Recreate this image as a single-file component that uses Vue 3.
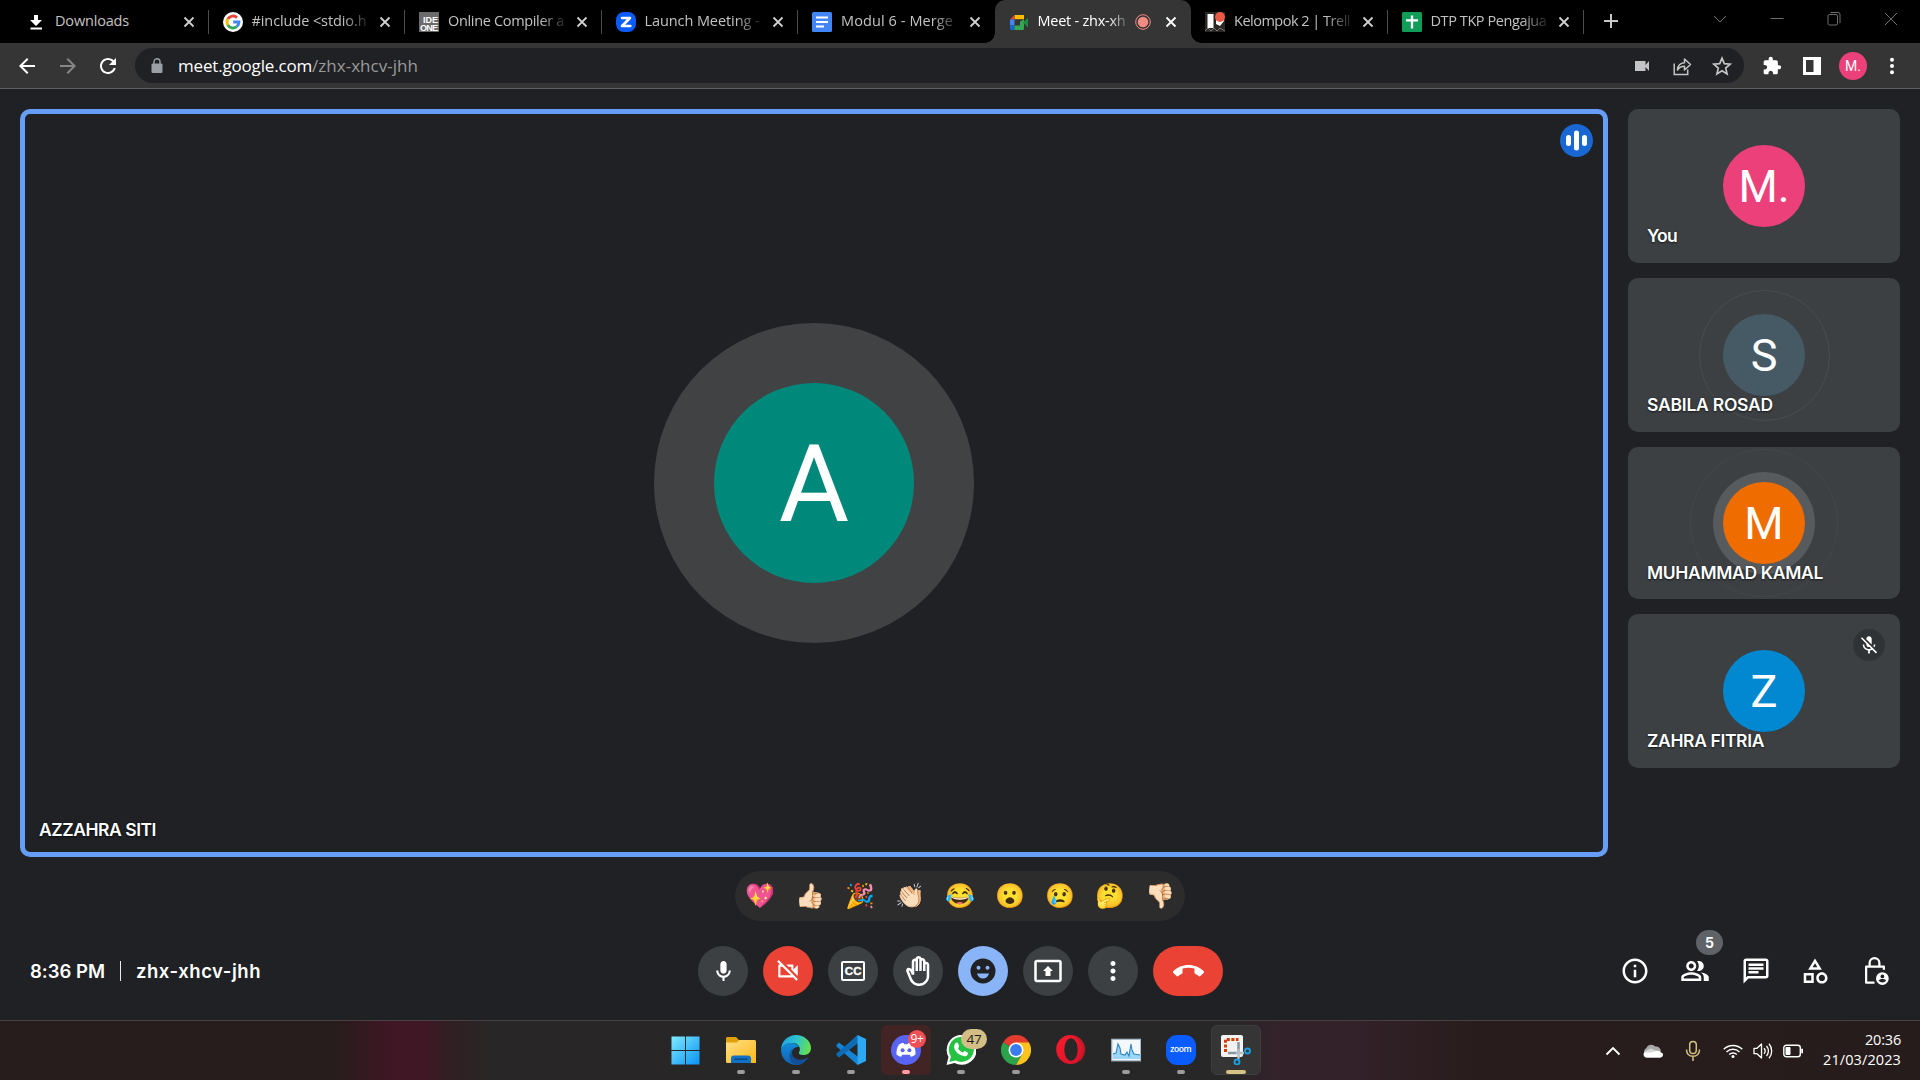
<script setup>
// Spreads or tightens the letters of a label so that it fills a known width.
const vFit = {
  mounted(el, { value }) {
    const natural = el.getBoundingClientRect().width
    el.style.letterSpacing = (value - natural) / el.textContent.length + 'px'
  },
}

const tabs = [
  { id: 'downloads', title: 'Downloads', w: 74 },
  { id: 'google', title: '#include <stdio.h', w: 115 },
  { id: 'ideone', title: 'Online Compiler a', w: 116 },
  { id: 'zoomtab', title: 'Launch Meeting -', w: 115 },
  { id: 'docs', title: 'Modul 6 - Merge', w: 112 },
  { id: 'meet', title: 'Meet - zhx-xh', w: 88, active: true },
  { id: 'trello', title: 'Kelompok 2 | Trell', w: 116 },
  { id: 'sheets', title: 'DTP TKP Pengajua', w: 116 },
]

const people = [
  { name: 'You', w: 30, letter: 'M.', color: '#ec407a', h: 154 },
  { name: 'SABILA ROSAD', w: 126, letter: 'S', color: '#455a64', h: 154, ring: 's' },
  { name: 'MUHAMMAD KAMAL', w: 176, letter: 'M', color: '#ef6c00', h: 152, ring: 'm' },
  { name: 'ZAHRA FITRIA', w: 117, letter: 'Z', color: '#0288d1', h: 154, muted: true },
]

const reactions = ['💖', '👍🏻', '🎉', '👏🏻', '😂', '😮', '😢', '🤔', '👎🏻']

const MIC = 'M12 14c1.66 0 3-1.34 3-3V5c0-1.66-1.34-3-3-3S9 3.34 9 5v6c0 1.66 1.34 3 3 3zM17 11c0 2.76-2.24 5-5 5s-5-2.24-5-5H5c0 3.53 2.61 6.43 6 6.92V21h2v-3.08c3.39-.49 6-3.39 6-6.92h-2z'
const CAM_OFF = 'M9.56 8l-2-2-4.15-4.14L2 3.27 4.73 6H4c-.55 0-1 .45-1 1v10c0 .55.45 1 1 1h12c.21 0 .39-.08.55-.18L19.73 21l1.41-1.41-8.86-8.86L9.56 8zM5 16V8h1.73l8 8H5zm10-8v2.61l6 6V6.5l-4 4V7c0-.55-.45-1-1-1h-5.61l2 2H15z'
const HAND = 'M21 7c0-1.38-1.12-2.5-2.5-2.5-.17 0-.34.02-.5.05V4c0-1.38-1.12-2.5-2.5-2.5-.23 0-.46.03-.67.09C14.46.66 13.56 0 12.5 0c-1.23 0-2.25.89-2.46 2.06C9.87 2.02 9.69 2 9.5 2 8.12 2 7 3.12 7 4.5v5.89c-.34-.31-.76-.54-1.22-.66L5.01 9.52c-.83-.23-1.7.09-2.19.83-.38.57-.4 1.31-.15 1.95l2.56 6.43C6.49 21.91 9.57 24 13 24c4.42 0 8-3.58 8-8V7zm-2 9c0 3.31-2.69 6-6 6-2.61 0-4.95-1.59-5.91-4.01L4.53 11.6l.53.14c.46.12.83.46 1 .9L7 15h2V4.5c0-.28.22-.5.5-.5s.5.22.5.5V12h2V2.5c0-.28.22-.5.5-.5s.5.22.5.5V12h2V4c0-.28.22-.5.5-.5s.5.22.5.5v8h2V7c0-.28.22-.5.5-.5s.5.22.5.5v9z'
const PRESENT = 'M21 3H3c-1.11 0-2 .89-2 2v14c0 1.11.89 2 2 2h18c1.11 0 2-.89 2-2V5c0-1.11-.89-2-2-2zm0 16.02H3V4.98h18v14.04zM10 12H8l4-4 4 4h-2v4h-4v-4z'
const MORE = 'M12 8c1.1 0 2-.9 2-2s-.9-2-2-2-2 .9-2 2 .9 2 2 2zm0 2c-1.1 0-2 .9-2 2s.9 2 2 2 2-.9 2-2-.9-2-2-2zm0 6c-1.1 0-2 .9-2 2s.9 2 2 2 2-.9 2-2-.9-2-2-2z'
const CALL_END = 'M12 9c-1.6 0-3.15.25-4.6.72v3.1c0 .39-.23.74-.56.9-.98.49-1.87 1.12-2.66 1.85-.18.18-.43.28-.7.28-.28 0-.53-.11-.71-.29L.29 13.08c-.18-.17-.29-.42-.29-.7 0-.28.11-.53.29-.71C3.34 8.78 7.46 7 12 7s8.66 1.78 11.71 4.67c.18.18.29.43.29.71 0 .28-.11.53-.29.71l-2.48 2.48c-.18.18-.43.29-.71.29-.27 0-.52-.11-.7-.28-.79-.74-1.69-1.36-2.67-1.85-.33-.16-.56-.5-.56-.9v-3.1C15.15 9.25 13.6 9 12 9z'
const MIC_OFF = 'M19 11h-1.7c0 .74-.16 1.43-.43 2.05l1.23 1.23c.56-.98.9-2.09.9-3.28zm-4.02.17c0-.06.02-.11.02-.17V5c0-1.66-1.34-3-3-3S9 3.34 9 5v.18l5.98 5.99zM4.27 3L3 4.27l6.01 6.01V11c0 1.66 1.33 3 2.99 3 .22 0 .44-.03.65-.08l1.66 1.66c-.71.33-1.5.52-2.31.52-2.76 0-5.3-2.1-5.3-5.1H5c0 3.41 2.72 6.23 6 6.72V21h2v-3.28c.91-.13 1.77-.45 2.54-.9L19.73 21 21 19.73 4.27 3z'

const controls = [
  { id: 'mic', d: MIC, size: 25 },
  { id: 'cam', d: CAM_OFF, size: 26, tone: 'red' },
  { id: 'cc' },
  { id: 'hand', d: HAND, size: 30 },
  { id: 'mood', tone: 'blue' },
  { id: 'present', d: PRESENT, size: 30 },
  { id: 'more', d: MORE, size: 30 },
]

const panels = [
  { id: 'info', d: 'M11 7h2v2h-2zm0 4h2v6h-2zm1-9C6.48 2 2 6.48 2 12s4.48 10 10 10 10-4.48 10-10S17.52 2 12 2zm0 18c-4.41 0-8-3.59-8-8s3.59-8 8-8 8 3.59 8 8-3.59 8-8 8z' },
  { id: 'people', d: 'M16.67 13.13C18.04 14.06 19 15.32 19 17v3h4v-3c0-2.18-3.57-3.47-6.33-3.87zM15 12c2.21 0 4-1.79 4-4s-1.79-4-4-4c-.47 0-.91.1-1.33.24C14.5 5.27 15 6.58 15 8s-.5 2.73-1.33 3.76c.42.14.86.24 1.33.24zM9 12c2.21 0 4-1.79 4-4s-1.79-4-4-4-4 1.79-4 4 1.79 4 4 4zm0-6c1.1 0 2 .9 2 2s-.9 2-2 2-2-.9-2-2 .9-2 2-2zM9 13c-2.67 0-8 1.34-8 4v3h16v-3c0-2.66-5.33-4-8-4zm6 5H3v-.99C3.2 16.29 6.3 15 9 15s5.8 1.29 6 2v1z', badge: '5' },
  { id: 'chat', d: 'M4 4h16v12H5.17L4 17.17V4m0-2c-1.1 0-1.99.9-1.99 2L2 22l4-4h14c1.1 0 2-.9 2-2V4c0-1.1-.9-2-2-2H4zm2 10h8v2H6v-2zm0-3h12v2H6V9zm0-3h12v2H6V6z' },
  { id: 'activities', d: 'M12 2l-5.5 9h11L12 2zm0 3.84L13.93 9h-3.87L12 5.84zM17.5 13c-2.49 0-4.5 2.01-4.5 4.5s2.01 4.5 4.5 4.5 4.5-2.01 4.5-4.5-2.01-4.5-4.5-4.5zm0 7c-1.38 0-2.5-1.12-2.5-2.5s1.12-2.5 2.5-2.5 2.5 1.12 2.5 2.5-1.12 2.5-2.5 2.5zM3 21.5h8v-8H3v8zm2-6h4v4H5v-4z' },
  { id: 'host' },
]
</script>

<template>
  <div class="screen">
    <div class="tabstrip">
      <div v-for="t in tabs" :key="t.id" class="tab" :class="[t.id, { active: t.active }]">
        <svg class="fav" viewBox="0 0 20 20">
          <path v-if="t.id === 'downloads'" fill="#fff" d="M8 3h4v5h4l-6 6-6-6h4zM4.500 15.600h11.500v2H4.500z" />
          <g v-else-if="t.id === 'google'">
            <circle cx="10" cy="10" r="10" fill="#fff" />
            <g fill="none" stroke-width="2.9">
              <path d="M14 5.6A6 6 0 0 0 4.8 7" stroke="#ea4335" />
              <path d="M4.8 7a6 6 0 0 0 0 6" stroke="#fbbc05" />
              <path d="M4.8 13a6 6 0 0 0 8.9 1.7" stroke="#34a853" />
              <path d="M13.7 14.7A6 6 0 0 0 16 10H10.200" stroke="#4285f4" />
            </g>
          </g>
          <g v-else-if="t.id === 'ideone'">
            <rect width="20" height="20" fill="#6b6b6b" />
            <text x="4" y="10.600" class="ide" textLength="15">IDE</text>
            <text x="1" y="19" class="ide" textLength="18">ONE</text>
          </g>
          <g v-else-if="t.id === 'zoomtab'">
            <rect width="20" height="20" rx="8" fill="#0b5cff" />
            <path d="M6 6h8l-8 8h8.300" fill="none" stroke="#fff" stroke-width="2.600" stroke-linejoin="round" stroke-linecap="round" />
          </g>
          <g v-else-if="t.id === 'docs'">
            <rect width="20" height="20" rx="1.500" fill="#4285f4" />
            <path d="M4 5.500h12M4 10h12M4 14.500h8" stroke="#fff" stroke-width="2" />
          </g>
          <g v-else-if="t.id === 'meet'">
            <path d="M5.500 3H15v4.200h-9.500z" fill="#fbbc04" />
            <path d="M1 7.500 5.500 3v4.500z" fill="#ea4335" />
            <path d="M1 7.500h4.500v6H1z" fill="#4285f4" />
            <path d="M1 13.500h4.500V18H2.500A1.500 1.500 0 0 1 1 16.500z" fill="#1967d2" />
            <path d="M5.500 13.500H11V9.800l4-2.600V16.500a1.500 1.500 0 0 1-1.500 1.500h-8z" fill="#34a853" />
            <path d="M14 10.500 19 6v9.500z" fill="#1e8e3e" />
          </g>
          <g v-else-if="t.id === 'trello'">
            <rect width="20" height="20" fill="#2a2725" />
            <path d="M0 19l3-3 3 3 3-3 3 3 3-3 5 3" stroke="#777" fill="none" />
            <rect x="2.500" y="2" width="6" height="14" fill="#fff" />
            <path d="M11 3h8v6l-4 5-4-2z" fill="#fff" />
            <circle cx="15" cy="5" r="5" fill="#eb5a46" />
          </g>
          <g v-else>
            <rect width="20" height="20" rx="1.500" fill="#0f9d58" />
            <path d="M10 3.500v13M4 8.300h12" stroke="#fff" stroke-width="2.300" />
          </g>
        </svg>
        <div class="title"><span v-fit="t.w">{{ t.title }}</span></div>
        <svg v-if="t.active" class="rec" viewBox="0 0 16 16">
          <circle cx="8" cy="8" r="7.300" fill="none" stroke="#f28b82" />
          <circle cx="8" cy="8" r="5.300" fill="#f28b82" />
        </svg>
        <svg class="x" viewBox="0 0 12 12"><path d="M1.500 1.500l9 9M10.500 1.500l-9 9" /></svg>
      </div>
      <svg class="plus" viewBox="0 0 16 16"><path d="M8 1v14M1 8h14" stroke="#c8c8c8" stroke-width="2" /></svg>
      <div class="winbtns">
        <svg viewBox="0 0 14 14"><path d="M1 4l6 6 6-6" /></svg>
        <svg viewBox="0 0 14 14"><path d="M.5 6.500h13" /></svg>
        <svg viewBox="0 0 14 14"><rect x="1" y="2.500" width="9.500" height="10.500" rx="1.500" /><path d="M3.500.5h7.500a2 2 0 0 1 2 2v8.500" /></svg>
        <svg viewBox="0 0 14 14"><path d="M1 1l12 12M13 1 1 13" /></svg>
      </div>
    </div>

    <div class="toolbar">
      <div class="nav">
        <svg viewBox="0 0 24 24" fill="#fff"><path d="M20 11H7.830l5.590-5.590L12 4l-8 8 8 8 1.410-1.410L7.830 13H20v-2z" /></svg>
        <svg viewBox="0 0 24 24" fill="#868686"><path d="M4 11h12.170l-5.590-5.590L12 4l8 8-8 8-1.410-1.410L16.170 13H4v-2z" /></svg>
        <svg viewBox="0 0 24 24" fill="#fff"><path d="M17.650 6.350C16.200 4.900 14.210 4 12 4c-4.420 0-7.990 3.580-7.990 8s3.570 8 7.990 8c3.730 0 6.840-2.550 7.730-6h-2.080c-.82 2.330-3.040 4-5.650 4-3.310 0-6-2.690-6-6s2.690-6 6-6c1.660 0 3.140.69 4.220 1.780L13 11h7V4l-2.350 2.350z" /></svg>
      </div>
      <div class="omnibox">
        <svg class="lock" viewBox="0 0 12 16"><rect x=".5" y="5.500" width="11" height="9.500" rx="1.300" fill="#9aa0a6" /><path d="M3 6V3.800a3 3 0 0 1 6 0V6" fill="none" stroke="#9aa0a6" stroke-width="1.400" /></svg>
        <div class="url"><span v-fit="134" class="host">meet.google.com</span><span v-fit="106">/zhx-xhcv-jhh</span></div>
        <div class="omniicons">
          <svg viewBox="0 0 20 20"><path d="M3 5h10.500v10H3zM13.500 9l3.500-4v10l-3.500-4z" fill="#c4c4c4" /></svg>
          <svg viewBox="0 0 20 20" fill="none" stroke="#c4c4c4" stroke-width="1.500"><path d="M2.200 7.500v11h13.500v-5" /><path d="M5.500 14c.3-4.500 3-7 7-7.200V3l6 5.500-6 5.500v-3.700c-3.500 0-5.500 1.200-7 3.700z" stroke-linejoin="round" /></svg>
          <svg viewBox="0 0 20 20"><path d="M10 2.200l2.300 5.500 5.900.5-4.500 3.900 1.400 5.800L10 14.800l-5.100 3.100 1.400-5.800-4.500-3.900 5.900-.5z" fill="none" stroke="#c4c4c4" stroke-width="1.700" /></svg>
        </div>
      </div>
      <div class="ext">
        <svg viewBox="0 0 24 24"><path fill="#fff" d="M20.500 11H19V7c0-1.100-.9-2-2-2h-4V3.500C13 2.120 11.880 1 10.500 1S8 2.120 8 3.500V5H4c-1.100 0-1.990.9-1.990 2v3.800H3.500c1.490 0 2.700 1.210 2.700 2.700s-1.210 2.700-2.700 2.700H2V20c0 1.100.9 2 2 2h3.800v-1.500c0-1.490 1.210-2.700 2.700-2.700 1.490 0 2.700 1.210 2.700 2.700V22H17c1.100 0 2-.9 2-2v-4h1.500c1.380 0 2.500-1.120 2.500-2.500S21.880 11 20.500 11z" /></svg>
        <svg viewBox="0 0 20 20"><path fill="#fff" fill-rule="evenodd" d="M1 1h18v18H1zM4 4v12h7.500V4z" /></svg>
        <span class="profile">M.</span>
        <svg viewBox="0 0 20 20" fill="#fff"><circle cx="10" cy="3.700" r="2" /><circle cx="10" cy="10" r="2" /><circle cx="10" cy="16.300" r="2" /></svg>
      </div>
    </div>

    <div class="meeting">
      <div class="stage">
        <div class="speaker">
          <div class="halo"><div class="bigavatar">A</div></div>
          <svg class="talk" viewBox="0 0 33 33"><circle cx="16.500" cy="16.500" r="16.500" fill="#1967d2" /><g fill="#fff"><rect x="6" y="11" width="5" height="11" rx="2.500" /><rect x="14" y="6.500" width="5" height="20" rx="2.500" /><rect x="22" y="11" width="5" height="11" rx="2.500" /></g></svg>
          <div class="name"><span v-fit="117">AZZAHRA SITI</span></div>
        </div>
        <div class="side">
          <div v-for="p in people" :key="p.name" class="tile" :style="{ height: p.h + 'px' }">
            <div v-if="p.ring" class="ring" :class="p.ring"></div>
            <div class="avatar" :class="{ loud: p.ring === 'm' }" :style="{ background: p.color }">{{ p.letter }}</div>
            <svg v-if="p.muted" class="muted" viewBox="0 0 32 32"><circle cx="16" cy="16" r="16" fill="#303336" /><path :d="MIC_OFF" fill="#fff" transform="translate(5.200 5.500) scale(.9)" /></svg>
            <div class="name"><span v-fit="p.w">{{ p.name }}</span></div>
          </div>
        </div>
      </div>

      <div class="reactions"><span v-for="r in reactions" :key="r">{{ r }}</span></div>

      <div class="bottombar">
        <div class="meta"><span v-fit="75">8:36 PM</span><i></i><span v-fit="125">zhx-xhcv-jhh</span></div>
        <div class="controls">
          <button v-for="c in controls" :key="c.id" :class="c.tone">
            <svg v-if="c.d" viewBox="0 0 24 24" :width="c.size" :height="c.size"><path :d="c.d" /></svg>
            <svg v-else-if="c.id === 'cc'" viewBox="0 0 24 20" width="24" height="20"><rect x="1" y="1" width="22" height="18" rx="1" fill="none" stroke="#fff" stroke-width="2" /><text x="3.700" y="14.200" class="cc" textLength="16.800">CC</text></svg>
            <svg v-else viewBox="0 0 26 26" width="26" height="26"><circle cx="13" cy="13" r="12.500" fill="#202124" /><circle cx="8.500" cy="9.800" r="2" /><circle cx="17.500" cy="9.800" r="2" /><path d="M7 15.500h12c-.8 3-3 5-6 5s-5.200-2-6-5z" /></svg>
          </button>
          <button class="leave"><svg viewBox="0 0 24 24" width="31" height="31"><path :d="CALL_END" /></svg></button>
        </div>
        <div class="panels">
          <div v-for="p in panels" :key="p.id" class="panel" :class="p.id">
            <svg v-if="p.d" viewBox="0 0 24 24"><path :d="p.d" fill-rule="evenodd" /></svg>
            <svg v-else viewBox="0 0 24 24"><path d="M10.800 21.300H4.100V8.400H18.300v2.600M6.900 8V5.500a3.900 3.900 0 0 1 7.800 0V8" fill="none" stroke="#fff" stroke-width="1.800" stroke-linejoin="round" /><circle cx="17.100" cy="18" r="5.100" /><circle cx="17.100" cy="16.300" r="1.500" fill="#202124" /><path d="M14.100 19.600c1.600-1.500 4.400-1.500 6 0-1.600 2-4.400 2-6 0z" fill="#202124" /></svg>
            <span v-if="p.badge" class="badge">{{ p.badge }}</span>
          </div>
        </div>
      </div>
    </div>

    <div class="taskbar">
      <div class="apps">
        <div class="app nodot start">
          <svg viewBox="0 0 30 30"><defs><linearGradient id="win" x1="0" y1="0" x2="1" y2="1"><stop offset="0" stop-color="#7eebff" /><stop offset="1" stop-color="#0a92f5" /></linearGradient></defs><path d="M.5.5h14v14H.5zM15.500.5h14v14h-14zM.5 15.500h14v14H.5zM15.500 15.500h14v14h-14z" fill="url(#win)" /></svg>
        </div>
        <div class="app">
          <svg viewBox="0 0 30 30"><defs><linearGradient id="fol" x1="0" y1="0" x2="1" y2="1"><stop offset="0" stop-color="#ffe08a" /><stop offset="1" stop-color="#fdb813" /></linearGradient></defs><path d="M0 3.500C0 2.600.6 2 1.500 2H10l3 3h15v6H0z" fill="#dfa00b" /><path d="M0 7.500h10.500l3-2.500H28.500A1.500 1.500 0 0 1 30 6.500V28H1.500A1.500 1.500 0 0 1 0 26.500z" fill="url(#fol)" /><path d="M5 28v-4.500a3 3 0 0 1 3-3h14a3 3 0 0 1 3 3V28z" fill="#1271c4" /><path d="M8.500 24.200h13" stroke="#0b4377" stroke-width="1.300" /></svg>
        </div>
        <div class="app">
          <svg viewBox="0 0 30 30"><defs><linearGradient id="ed" x1="0" y1=".2" x2="1" y2=".4"><stop offset="0" stop-color="#1ba3e0" /><stop offset=".5" stop-color="#2cc3d2" /><stop offset="1" stop-color="#66e04f" /></linearGradient><linearGradient id="ed2" x1="0" y1="0" x2="0" y2="1"><stop offset="0" stop-color="#138bd8" /><stop offset="1" stop-color="#1061b0" /></linearGradient></defs><path d="M0 15C0 6.500 6.800 0 15 0s15 6 15 13c0 4.500-3.300 7-7.500 7-3.200 0-4.600-1-4.600-2s1-1.300 1-4c0-3-3-6-7.400-6C6 8 1 11 0 15z" fill="url(#ed)" /><path d="M0 15c1-4 5-7 10-7 4 0 7 2 8 4-4-.5-7 2-7 6 0 6.500 5.500 11 11 10.300A15 15 0 0 1 0 15z" fill="url(#ed2)" /><path d="M13 12.800c-4 3-3 10 4 11.700 4 1 8-1 10.500-2.500C25 27 20 30 15 30 8 29 6 16 13 12.800z" fill="#124f97" /></svg>
        </div>
        <div class="app">
          <svg viewBox="0 0 30 30"><path d="M21.500 0 5.500 15l16 15V21.500L12.500 15l9-6.500z" fill="#1b7fcb" /><path d="M.5 9.700 3 7.600l19 14.400v8L.5 11.500z" fill="#1583d3" /><path d="M.5 20.300 3 22.400l19-14.400V0L.5 18.500z" fill="#0c6cb5" /><path d="M21.500 0 30 4v22l-8.500 4z" fill="#2da8f3" /></svg>
        </div>
        <div class="app discord">
          <svg viewBox="0 0 30 30"><circle cx="15" cy="15" r="15" fill="#5865f2" /><path d="M8 9.500c2-1.200 3.500-1.500 4.700-1.500l.6 1.300h3.400l.6-1.300c1.200 0 2.700.3 4.700 1.500 2 3 2.800 6.500 2.500 10-1.500 1.200-3 1.900-4.700 2.200l-1-1.900h-7.600l-1 1.900c-1.700-.3-3.200-1-4.700-2.200-.3-3.500.5-7 2.500-10z" fill="#fff" /><circle cx="11.600" cy="15.300" r="2" fill="#5865f2" /><circle cx="18.400" cy="15.300" r="2" fill="#5865f2" /></svg>
          <span class="count red">9+</span>
        </div>
        <div class="app">
          <svg viewBox="0 0 30 30"><path d="M.5 30l2-8A15 15 0 1 1 8.500 28z" fill="#fff" /><path d="M3.300 27l1.700-5.500a12.500 12.500 0 1 1 4.500 4z" fill="#25c244" /><path d="M9.600 8.200c1-1 2-.8 2.500.2l1 2.500c.3.700-1 1.700-1 2.300.9 2 2.500 3.500 4.600 4.300.7 0 1.400-1.700 2.100-1.400l2.700 1.300c.8.500.4 2.200-.5 3-1.500 1.400-3.700 1-6.400-.3-3.500-1.700-5.500-4.600-6.200-6.700-.6-2-.2-3.800 1.200-5.200z" fill="#fff" /></svg>
          <span class="count gold">47</span>
        </div>
        <div class="app">
          <svg viewBox="0 0 30 30"><path d="M15 15 2 7.500A15 15 0 0 1 28 7.500L28 8H15z" fill="#e33b2e" /><path d="M2 7.500A15 15 0 0 0 15 30l6.500-11.200L15 15z" fill="#2ba24c" /><path d="M15 30A15 15 0 0 0 28 7.500H15l6.300 11.200z" fill="#fcc31e" /><circle cx="15" cy="15" r="7.500" fill="#fff" /><circle cx="15" cy="15" r="5.900" fill="#3a7cf0" /></svg>
        </div>
        <div class="app nodot">
          <svg viewBox="0 0 30 30"><defs><linearGradient id="op" x1="0" y1="0" x2="1" y2="1"><stop offset="0" stop-color="#ff1b2d" /><stop offset="1" stop-color="#d0132a" /></linearGradient></defs><ellipse cx="14.500" cy="14.500" rx="14.300" ry="14.500" fill="url(#op)" /><path d="M14 .5a14.300 14.300 0 1 1 0 28.500 12 12 0 0 0 8-3c3-3 4-7 4-11s-2-9-5-11a10 10 0 0 0-7-3.500z" fill="#b21b26" opacity=".5" /><ellipse cx="15" cy="14.500" rx="6.700" ry="11.300" fill="#282828" /></svg>
        </div>
        <div class="app">
          <svg viewBox="0 0 30 30"><rect x=".8" y="4.300" width="28.900" height="21.500" fill="#f4f8fb" stroke="#a8bccb" stroke-width="1.200" /><path d="M2 24v-5l3-1 2-9 2 4 1 6 4 1 2-3 2 4 2-13 1 7 2 4 6 1v4z" fill="#9bd5f7" /><path d="M2 19l3-1 2-9 2 4 1 6 4 1 2-3 2 4 2-12 1 6 2 4 6 1" fill="none" stroke="#2d86c4" stroke-width="1.100" /></svg>
        </div>
        <div class="app">
          <svg viewBox="0 0 30 30"><rect width="30" height="30" rx="11" fill="#0b5cff" /><text x="4.200" y="17.300" class="zoom" textLength="21.500">zoom</text></svg>
        </div>
        <div class="app snip">
          <svg viewBox="0 0 30 30"><rect x="0" y="0" width="22" height="22" rx="2" fill="#f3f3f3" /><path d="M4.500 17V4.500h13" fill="none" stroke="#d83b01" stroke-width="3" stroke-dasharray="3 1.600" /><path d="M17.500 7v11H7" fill="none" stroke="#8b97a0" stroke-width="2.600" /><path d="M17.500 14v10M15 18h8" fill="none" stroke="#b5bec5" stroke-width="2.400" /><circle cx="26.500" cy="16" r="2.500" fill="none" stroke="#1e9de0" stroke-width="1.900" /><circle cx="16" cy="27" r="2.500" fill="none" stroke="#1e9de0" stroke-width="1.900" /></svg>
        </div>
      </div>
      <div class="tray">
        <svg class="t1" viewBox="0 0 20 20"><path d="M3.500 13.500 10 7l6.500 6.500" fill="none" stroke="#fff" stroke-width="1.900" /></svg>
        <svg class="t2" viewBox="0 0 20 14"><path d="M3 11a4 4 0 0 1 .3-7 5.500 5.500 0 0 1 9-1.500 5 5 0 0 1 5.700 5z" fill="#a8a8a8" /><path d="M3.500 13.500a3.500 3.500 0 0 1-1-6.500L8 4.500 20 10a3.500 3.500 0 0 1-3 3.500z" fill="#d6d6d6" /><path d="M3 13.500A3.200 3.200 0 0 1 1 9c3-1 9 0 12-2 2-.5 4 0 5 1.500 3 .5 2 5-.5 5z" fill="#fff" /></svg>
        <svg class="t3" viewBox="0 0 16 22" fill="none" stroke="#d2c283" stroke-width="1.500"><rect x="4.700" y="1.500" width="6.600" height="12" rx="3.300" /><path d="M1.500 9.500c0 4 2.500 6.800 6.500 6.800s6.500-2.800 6.500-6.800M8 16.500V21" /></svg>
        <svg class="t4" viewBox="0 0 20 16" fill="none" stroke="#fff" stroke-width="1.400"><path d="M.7 6.300a13.200 13.200 0 0 1 18.600 0M3.500 9a9.200 9.200 0 0 1 13 0M6.200 11.600a5.400 5.400 0 0 1 7.600 0" /><circle cx="10" cy="13.600" r="1.500" fill="#fff" stroke="none" /></svg>
        <svg class="t5" viewBox="0 0 20 18" fill="none" stroke="#fff" stroke-width="1.300"><path d="M1 6.300h3L8.500 2v14L4 11.700H1z" stroke-linejoin="round" /><path d="M11 6.300a4 4 0 0 1 0 5.400M13.500 4a7.500 7.500 0 0 1 0 10M16 1.800a11 11 0 0 1 0 14.400" /></svg>
        <svg class="t6" viewBox="0 0 20 14"><rect x=".8" y="1.300" width="16.500" height="11.400" rx="2.500" fill="none" stroke="#fff" stroke-width="1.400" /><rect x="2.500" y="3" width="5" height="8" rx="1" fill="#fff" /><path d="M18.200 4.800h1.800v4.400h-1.800z" fill="#fff" /></svg>
        <div class="clock"><span v-fit="36">20:36</span><span v-fit="78">21/03/2023</span></div>
      </div>
    </div>
  </div>
</template>

<style>
html, body { margin: 0; background: #202124; overflow: hidden; }
</style>

<style scoped>
* { box-sizing: border-box; }
svg { display: block; flex: none; }
.screen { width: 1920px; height: 1080px; display: flex; flex-direction: column; background: #202124; color: #fff; font-family: "Open Sans", "Noto Sans", sans-serif; overflow: hidden; }

/* tab strip */
.tabstrip { height: 43px; background: #000; display: flex; padding-left: 12px; flex: none; }
.tab { width: 196.5px; height: 43px; flex: none; display: flex; align-items: center; padding: 0 13px 0 14px; position: relative; color: #c3c3c3; font-size: 14.500px; }
.tab::after { content: ""; position: absolute; right: 0; top: 10px; width: 1px; height: 24px; background: #4c4c4c; }
.tab.docs::after, .tab.active::after { display: none; }
.fav { width: 20px; height: 20px; margin-right: 9px; }
.title { flex: 1; min-width: 0; white-space: nowrap; line-height: 22px; margin-bottom: 2px; }
.tab:not(.downloads) .title { -webkit-mask-image: linear-gradient(90deg, #000 78%, rgba(0, 0, 0, .15) 100%); mask-image: linear-gradient(90deg, #000 78%, rgba(0, 0, 0, .15) 100%); }
.title span, .url span, .name span, .meta span, .clock span { display: inline-block; white-space: nowrap; }
.x { width: 12px; height: 12px; margin-left: 11px; margin-right: 1px; }
.x path { stroke: #d0d0d0; stroke-width: 1.800; }
.active { background: #353535; border-radius: 10px 10px 0 0; color: #fff; }
.active::before { content: ""; position: absolute; left: -10px; right: -10px; bottom: 0; height: 10px; background: radial-gradient(circle at 0 0, transparent 9.500px, #353535 10px) left / 10px 10px no-repeat, radial-gradient(circle at 100% 0, transparent 9.500px, #353535 10px) right / 10px 10px no-repeat; }
.active .x path { stroke: #fff; }
.rec { width: 16px; height: 16px; margin-left: 7px; margin-right: 3px; }
.ide { font: bold 9px "Liberation Sans", sans-serif; fill: #fff; }
.plus { width: 16px; height: 16px; margin: 13px 0 0 19px; }
.winbtns { margin-left: auto; display: flex; gap: 43px; padding: 12px 22px 0 0; }
.winbtns svg { width: 14px; height: 14px; fill: none; stroke: #6e6e6e; stroke-width: 1; }

/* toolbar */
.toolbar { height: 46px; background: #353535; border-bottom: 1px solid #5f5f5f; display: flex; align-items: center; flex: none; }
.nav { display: flex; width: 135px; padding-left: 15px; gap: 16.500px; }
.nav svg { width: 24px; height: 24px; }
.omnibox { width: 1609px; height: 35px; border-radius: 18px; background: #202124; display: flex; align-items: center; padding-left: 16px; }
.lock { width: 12px; height: 16px; }
.url { margin-left: 15px; font-size: 17px; line-height: 24px; color: #9a9a9a; white-space: nowrap; }
.url .host { color: #fff; }
.omniicons { margin-left: auto; display: flex; gap: 20px; padding-right: 12px; }
.omniicons svg { width: 20px; height: 20px; }
.ext { display: flex; align-items: center; padding-left: 18px; }
.ext svg { width: 20px; height: 20px; }
.ext svg + svg { margin-left: 20px; }
.profile { width: 28px; height: 28px; border-radius: 50%; background: #ec407a; margin: 0 15px 0 17px; text-align: center; font: 14px/28px Roboto, sans-serif; }

/* meeting */
.meeting { height: 931px; flex: none; display: flex; flex-direction: column; }
.stage { display: flex; gap: 20px; padding: 20px 20px 0; }
.speaker { width: 1588px; height: 748px; border: 5px solid #669df6; border-radius: 10px; position: relative; display: flex; align-items: center; justify-content: center; }
.halo { width: 320px; height: 320px; border-radius: 50%; background: #414243; display: flex; align-items: center; justify-content: center; }
.bigavatar { width: 200px; height: 200px; border-radius: 50%; background: #00897b; text-align: center; font: 108px/203px Roboto, sans-serif; }
.talk { position: absolute; width: 33px; height: 33px; right: 10px; top: 10px; }
.name { position: absolute; left: 19px; bottom: 16px; font: 600 17.500px/22px Inter, sans-serif; text-shadow: 0 1px 2px rgba(0, 0, 0, .6), 0 0 2px rgba(0, 0, 0, .3); }
.speaker .name { left: 14px; bottom: 11px; }
.side { display: flex; flex-direction: column; gap: 15px; }
.tile { width: 272px; background: #3c4043; border-radius: 10px; position: relative; display: flex; align-items: center; justify-content: center; overflow: hidden; }
.avatar { width: 82px; height: 82px; border-radius: 50%; text-align: center; font: 45px/83px Roboto, sans-serif; position: relative; }
.avatar.loud { box-shadow: 0 0 0 10px #585b5e; }
.ring { position: absolute; border-radius: 50%; border: 1px solid #4a4d50; }
.ring.s { width: 131px; height: 131px; left: 71px; top: 12px; }
.ring.m { width: 148px; height: 148px; left: 62px; top: 2px; border-color: #44474a; }
.ring.m ~ .name { bottom: 15px; }
.muted { position: absolute; width: 32px; height: 32px; right: 15px; top: 15px; }
.reactions { width: 450px; height: 50px; margin: 14px auto 0; border-radius: 25px; background: #2c2c2c; display: flex; padding: 0; flex: none; }
.reactions span { width: 50px; text-align: center; font: 24px/50px "Noto Color Emoji", sans-serif; white-space: nowrap; }
.bottombar { height: 50px; margin-top: 25px; display: flex; align-items: center; position: relative; }
.meta { width: 698px; padding-left: 30px; padding-bottom: 1px; display: flex; align-items: center; font: 600 18.500px/24px Inter, sans-serif; }
.meta i { width: 1px; height: 20px; background: #e8eaed; margin: 0 15px; }
.controls { display: flex; gap: 15px; }
button { width: 50px; height: 50px; border: 0; padding: 0; border-radius: 25px; background: #3c4043; display: flex; align-items: center; justify-content: center; fill: #fff; }
button.red, button.leave { background: #ea4335; }
button.blue { background: #8ab4f8; fill: #8ab4f8; }
button.leave { width: 70px; }
.cc { font: bold 11.500px "Liberation Sans", sans-serif; fill: #fff; stroke: #fff; stroke-width: .4; }
.panels { display: flex; margin-left: auto; padding-right: 29px; gap: 30.200px; }
.panel { position: relative; }
.panel svg { width: 30px; height: 30px; fill: #fff; }
.panel.activities { margin-left: -1px; margin-right: 1px; }
.badge { position: absolute; left: 15.500px; top: -26px; width: 27px; height: 25px; border-radius: 13px; background: #5f6368; text-align: center; font: bold 14px/25px Inter, sans-serif; }

/* taskbar */
.taskbar { height: 60px; flex: none; border-top: 1px solid #48413f; position: relative; display: flex; padding-left: 661px; background: linear-gradient(90deg, #281d1d 0, #271d1c 330px, #2f1a1f 355px, #401724 390px, #401724 425px, #301f23 450px, #282626 490px, #272727 1230px, #33222a 1275px, #33222a 1340px, #281c1c 1480px, #271c1c 100%); }
.apps { display: flex; gap: 5px; padding-top: 4px; }
.app { width: 50px; height: 50px; position: relative; display: flex; align-items: center; justify-content: center; border-radius: 6px; }
.app svg { width: 30px; height: 30px; }
.app.start svg { width: 29px; height: 29px; margin-right: 2px; margin-top: 1px; }
.app::after { content: ""; position: absolute; left: 21px; bottom: 1px; width: 8px; height: 4px; border-radius: 2px; background: #9b9b9b; }
.app.nodot::after { display: none; }
.app.discord { background: #432424; }
.app.discord::after { background: #ff99a4; }
.app.snip { background: #353535; border: 1px solid #3d3d3d; }
.app.snip::after { left: 14px; bottom: 0; width: 20px; background: #d2c283; }
.count { position: absolute; border-radius: 10px; text-align: center; letter-spacing: -.3px; }
.count.red { right: 5px; top: 5px; width: 18px; height: 18px; background: #ef4f55; font-size: 12px; line-height: 18px; }
.count.gold { right: -1px; top: 4px; width: 26px; height: 20px; background: #d3bf86; color: #1b1b1b; font-size: 13.500px; line-height: 20px; }
.zoom { font: 600 8.500px "Open Sans", sans-serif; fill: #fff; }
.tray { margin-left: auto; display: flex; align-items: center; padding-right: 19px; }
.t1 { width: 20px; height: 20px; margin-right: 20px; }
.t2 { width: 20px; height: 14px; margin-right: 22px; }
.t3 { width: 16px; height: 22px; margin-right: 22px; }
.t4 { width: 20px; height: 16px; margin-right: 10px; }
.t5 { width: 20px; height: 18px; margin-right: 10px; }
.t6 { width: 20px; height: 14px; margin-right: 20px; }
.clock { display: flex; flex-direction: column; align-items: flex-end; font-size: 14.500px; line-height: 20px; width: 78px; padding-bottom: 2px; }
</style>
